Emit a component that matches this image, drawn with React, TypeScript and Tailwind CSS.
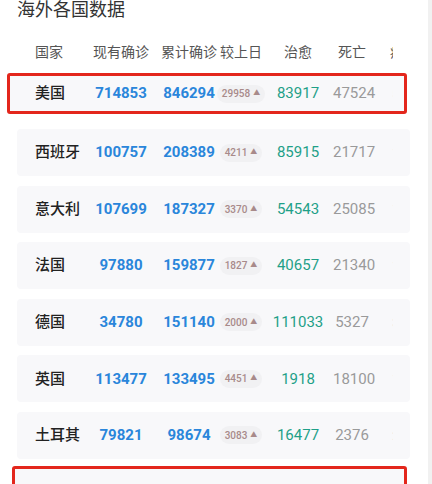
import React from "react";

type Row = { name: string; cur: string; total: string; delta: string; cured: string; dead: string; rate: string };

const rows: Row[] = [
  { name: "西班牙", cur: "100757", total: "208389", delta: "4211", cured: "85915", dead: "21717", rate: "10.42%" },
  { name: "意大利", cur: "107699", total: "187327", delta: "3370", cured: "54543", dead: "25085", rate: "13.39%" },
  { name: "法国", cur: "97880", total: "159877", delta: "1827", cured: "40657", dead: "21340", rate: "13.35%" },
  { name: "德国", cur: "34780", total: "151140", delta: "2000", cured: "111033", dead: "5327", rate: "3.52%" },
  { name: "英国", cur: "113477", total: "133495", delta: "4451", cured: "1918", dead: "18100", rate: "13.56%" },
  { name: "土耳其", cur: "79821", total: "98674", delta: "3083", cured: "16477", dead: "2376", rate: "2.41%" },
];

const usa: Row = { name: "美国", cur: "714853", total: "846294", delta: "29958", cured: "83917", dead: "47524", rate: "5.62%" };

const font = { fontFamily: "Roboto, 'Noto Sans CJK SC', sans-serif" };

function Cells({ r }: { r: Row }) {
  return (
    <div className="flex items-center w-[358px] overflow-hidden whitespace-nowrap">
      <div className="w-[58px] shrink-0 text-[15px] font-medium text-[#222]">{r.name}</div>
      <div className="w-[56px] shrink-0 text-center text-[15px] font-bold text-[#2a86db]">{r.cur}</div>
      <div className="w-[10px] shrink-0" />
      <div className="w-[60px] shrink-0 text-center text-[15px] font-bold text-[#2a86db]">{r.total}</div>
      <div className="w-[44px] shrink-0 flex justify-center">
        <span className="flex items-center gap-[3px] h-[18px] px-[5px] rounded-full bg-[#f1f1f3] text-[10px] font-medium text-[#a88a8a]">
          {r.delta}
          <span className="text-[7px] leading-none">▲</span>
        </span>
      </div>
      <div className="w-[70px] shrink-0 text-center text-[15px] text-[#1fa088]">{r.cured}</div>
      <div className="w-[38px] shrink-0 text-center text-[15px] text-[#9a9a9a]">{r.dead}</div>
      <div className="w-[60px] shrink-0 text-[13px] text-[#ddd] pl-[21px]">{r.rate}</div>
    </div>
  );
}

export default function App() {
  return (
    <div className="flex w-[432px] h-[484px] overflow-hidden bg-white" style={font}>
      <div className="w-[428px] shrink-0 pl-[17px]">
        <div className="h-[20px] leading-[20px] text-[18px] text-[#333]">海外各国数据</div>
        <div className="mt-[22px] h-[20px] pl-[18px] flex items-center">
          <div className="flex items-center w-[358px] overflow-hidden whitespace-nowrap text-[14px] text-[#555]">
            <div className="w-[58px] shrink-0">国家</div>
            <div className="w-[56px] shrink-0 text-center">现有确诊</div>
            <div className="w-[10px] shrink-0" />
            <div className="w-[60px] shrink-0 text-center">累计确诊</div>
            <div className="w-[44px] shrink-0 text-center">较上日</div>
            <div className="w-[70px] shrink-0 text-center">治愈</div>
            <div className="w-[38px] shrink-0 text-center">死亡</div>
            <div className="w-[60px] shrink-0 pl-[19px]">病死率</div>
          </div>
        </div>
        <div className="mt-[11px] -ml-[10px] w-[400px] h-[41px] border-[3px] border-[#e3261c] rounded-[3px] bg-[#f8f8fa] pl-[25px] flex items-center">
          <Cells r={usa} />
        </div>
        <div className="mt-[15px] flex flex-col gap-[9.6px]">
          {rows.map((r) => (
            <div key={r.name} className="w-[393px] h-[47px] rounded-[4px] bg-[#f8f8fa] pl-[18px] flex items-center">
              <Cells r={r} />
            </div>
          ))}
        </div>
        <div className="mt-[7px] -ml-[5px] w-[395px] h-[47px] border-[3px] border-[#e3261c] rounded-[3px] bg-[#f8f8fa]" />
      </div>
      <div className="w-[4px] h-full bg-[#f1f1f1]" />
    </div>
  );
}
